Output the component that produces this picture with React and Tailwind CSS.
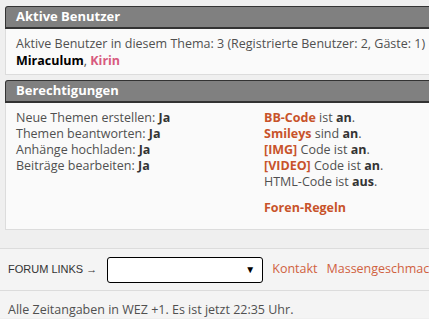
import React from "react";

const font = { fontFamily: '"Open Sans", "Liberation Sans", sans-serif' };

const Panel = ({ title, children }) => (
  <div className="ml-[5px] w-[440px]">
    <div className="h-[23px] border border-b-2 border-[#333] bg-[#808080] rounded-tl-[3px] pl-[10px] flex items-center text-white font-bold text-[13px]">
      {title}
    </div>
    <div className="border border-t-0 border-[#dcdcdc] bg-[#fafafa]">{children}</div>
  </div>
);

const permissions = [
  "Neue Themen erstellen:",
  "Themen beantworten:",
  "Anhänge hochladen:",
  "Beiträge bearbeiten:",
];

export default function App() {
  return (
    <div
      className="w-[429px] h-[319px] overflow-hidden bg-[#efefef] text-[12.5px] text-[#505050]"
      style={font}
    >
      <div className="pt-[6px]">
        <Panel title="Aktive Benutzer">
          <div className="px-[10px] pt-[7px] pb-[5px] leading-[16px]">
            <div>Aktive Benutzer in diesem Thema: 3 (Registrierte Benutzer: 2, Gäste: 1)</div>
            <div className="mt-[1px]">
              <b className="text-black">Miraculum</b>, <b className="text-[#d85a7f]">Kirin</b>
            </div>
          </div>
        </Panel>
      </div>

      <div className="pt-[5px]">
        <Panel title="Berechtigungen">
          <div className="flex px-[10px] pt-[7px] pb-[13px] leading-[16px]">
            <div className="w-[248px]">
              {permissions.map((p) => (
                <div key={p}>
                  {p} <b className="text-[#333]">Ja</b>
                </div>
              ))}
            </div>
            <div>
              <div>
                <b className="text-[#c8532a]">BB-Code</b> ist <b className="text-[#333]">an</b>.
              </div>
              <div>
                <b className="text-[#c8532a]">Smileys</b> sind <b className="text-[#333]">an</b>.
              </div>
              <div>
                <b className="text-[#c8532a]">[IMG]</b> Code ist <b className="text-[#333]">an</b>.
              </div>
              <div>
                <b className="text-[#c8532a]">[VIDEO]</b> Code ist <b className="text-[#333]">an</b>.
              </div>
              <div>
                HTML-Code ist <b className="text-[#333]">aus</b>.
              </div>
              <div className="mt-[10px]">
                <b className="text-[#c8532a]">Foren-Regeln</b>
              </div>
            </div>
          </div>
        </Panel>
      </div>

      <div className="mt-[18px] border-t border-[#dcdcdc] bg-[#f4f4f4]">
        <div className="flex items-center h-[42px] pl-[8px] border-b border-[#dcdcdc] whitespace-nowrap">
          <span
            className="shrink-0 text-[11px] text-[#333] mr-[10px]"
            style={{ fontFamily: '"Liberation Sans", Arial, sans-serif' }}
          >
            FORUM LINKS →
          </span>
          <div className="shrink-0 w-[156px] h-[26px] border border-black rounded-[3px] bg-white flex items-center justify-end pr-[7px] text-[10px] text-black">
            ▼
          </div>
          <a className="shrink-0 ml-[9px] text-[#d0613f]">Kontakt</a>
          <a className="shrink-0 ml-[9px] text-[#d0613f]">Massengeschmack</a>
        </div>
        <div className="pl-[8px] pt-[11px] leading-[16px]">
          Alle Zeitangaben in WEZ +1. Es ist jetzt 22:35 Uhr.
        </div>
      </div>
    </div>
  );
}
